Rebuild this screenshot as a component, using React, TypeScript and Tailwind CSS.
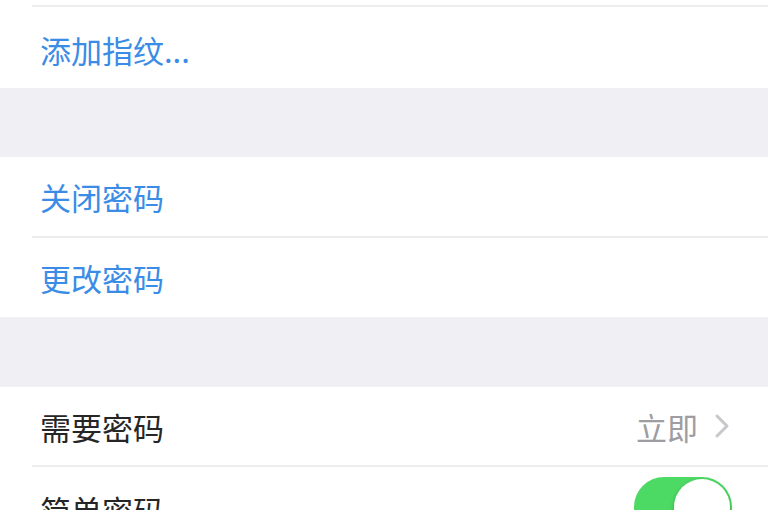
import React from "react";

const font = { fontFamily: '"Noto Sans CJK SC", "Noto Sans", sans-serif' };

function Sep() {
  return (
    <div className="bg-white pl-8">
      <div className="h-[2px] bg-[#ececee]" />
    </div>
  );
}

export default function App() {
  return (
    <div className="w-[768px] h-[510px] overflow-hidden bg-[#efeff4]" style={font}>
      <div className="bg-white h-[5px]" />
      <Sep />
      <div className="bg-white h-[81px] flex items-center pl-10 pt-1">
        <span className="text-[31px] leading-none text-[#3a8ce6]">添加指纹...</span>
      </div>
      <div className="h-[69px] bg-[#efeff4]" />
      <div className="bg-white h-[79px] flex items-center pl-10">
        <span className="text-[31px] leading-none text-[#3a8ce6]">关闭密码</span>
      </div>
      <Sep />
      <div className="bg-white h-[79px] flex items-center pl-10">
        <span className="text-[31px] leading-none text-[#3a8ce6]">更改密码</span>
      </div>
      <div className="h-[70px] bg-[#efeff4]" />
      <div className="bg-white h-[78px] flex items-center pl-10 pr-[38px]">
        <span className="text-[31px] leading-none text-[#262626]">需要密码</span>
        <div className="ml-auto flex items-center gap-[16px]">
          <span className="text-[31px] leading-none text-[#9d9da2]">立即</span>
          <svg width="16" height="26" viewBox="0 0 16 26" fill="none">
            <path d="M3 3 L13 13 L3 23" stroke="#c7c7cc" strokeWidth="3" strokeLinecap="round" strokeLinejoin="round" />
          </svg>
        </div>
      </div>
      <Sep />
      <div className="bg-white h-[100px] flex items-start pl-10 pr-[36px] pt-[10px]">
        <span className="text-[31px] leading-none text-[#262626] mt-[17px]">简单密码</span>
        <div className="ml-auto w-[98px] h-[60px] rounded-full bg-[#4cd964] relative">
          <div className="absolute right-[2px] top-[2px] w-[56px] h-[56px] rounded-full bg-white shadow-[0_2px_4px_rgba(0,0,0,0.25)]" />
        </div>
      </div>
    </div>
  );
}
